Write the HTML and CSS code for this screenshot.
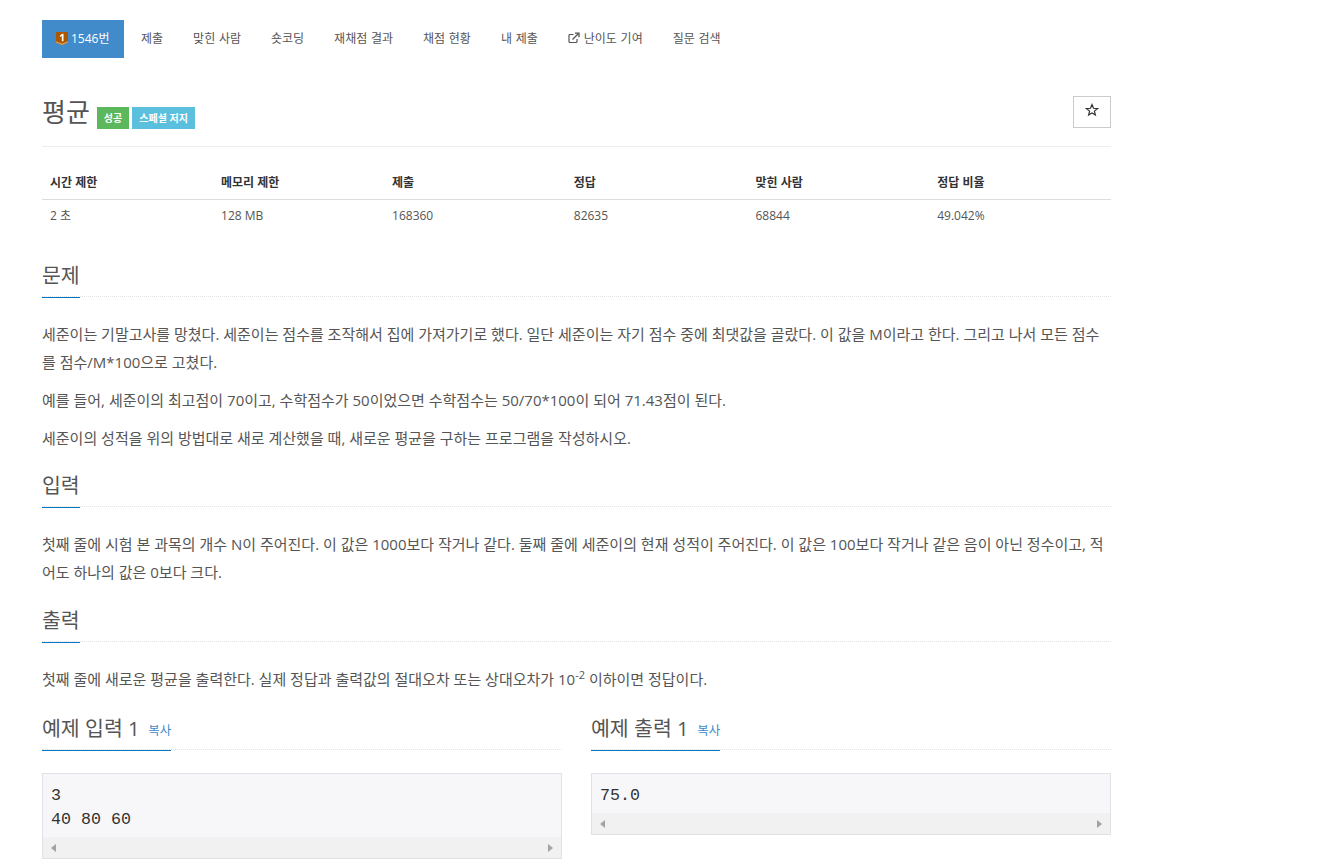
FILE: index.html
```html
<!DOCTYPE html>
<html lang="ko">
<head>
<meta charset="utf-8">
<title>평균</title>
<link rel="stylesheet" href="styles.css">
</head>
<body>
<div class="page">
  <nav class="tabs">
    <a class="tab tab-active"><svg class="tier" viewBox="0 0 12 13" width="12" height="13"><path d="M0 0h12v10.500L6 13 0 10.500z" fill="#ad5600"/><path d="M0 9.300l6 2.300 6-2.300v1.200L6 13 0 10.500z" fill="#e0a050"/><path d="M4 3.500L6.200 1.800h1.300v7.400H5.800V3.900L4 5z" fill="#fff"/></svg><span>1546번</span></a>
    <a class="tab">제출</a>
    <a class="tab">맞힌 사람</a>
    <a class="tab">숏코딩</a>
    <a class="tab">재채점 결과</a>
    <a class="tab">채점 현황</a>
    <a class="tab">내 제출</a>
    <a class="tab"><svg class="ext" viewBox="0 0 12 12" width="12" height="12"><path d="M9 7v2.500A1 1 0 0 1 8 10.500H2A1 1 0 0 1 1 9.500V3.500A1 1 0 0 1 2 2.500h3.500" fill="none" stroke="#555" stroke-width="1.200"/><path d="M4.500 7.500L10 2M7 1.200h4v4" fill="none" stroke="#555" stroke-width="1.300"/></svg>난이도 기여</a>
    <a class="tab">질문 검색</a>
  </nav>

  <header class="title-row">
    <h1 class="title">평균</h1>
    <span class="label label-green">성공</span>
    <span class="label label-blue">스페셜 저지</span>
    <button class="star" aria-label="즐겨찾기"><svg viewBox="0 0 14 14" width="14" height="14"><path d="M7 1.600l1.500 3.700 4 .3-3.100 2.500 1 3.900L7 10l-3.400 2 1-3.900L1.500 5.600l4-.3z" fill="none" stroke="#333" stroke-width="1.200"/></svg></button>
  </header>

  <table class="info">
    <thead>
      <tr><th class="c16">시간 제한</th><th class="c16">메모리 제한</th><th class="c17">제출</th><th class="c17">정답</th><th class="c17">맞힌 사람</th><th class="c17">정답 비율</th></tr>
    </thead>
    <tbody>
      <tr><td>2 초</td><td>128 MB</td><td>168360</td><td>82635</td><td>68844</td><td>49.042%</td></tr>
    </tbody>
  </table>

  <section class="sec sec-first">
    <div class="head"><h2 class="h">문제</h2></div>
    <div class="body">
      <p>세준이는 기말고사를 망쳤다. 세준이는 점수를 조작해서 집에 가져가기로 했다. 일단 세준이는 자기 점수 중에 최댓값을 골랐다. 이 값을 M이라고 한다. 그리고 나서 모든 점수를 점수/M*100으로 고쳤다.</p>
      <p>예를 들어, 세준이의 최고점이 70이고, 수학점수가 50이었으면 수학점수는 50/70*100이 되어 71.43점이 된다.</p>
      <p>세준이의 성적을 위의 방법대로 새로 계산했을 때, 새로운 평균을 구하는 프로그램을 작성하시오.</p>
    </div>
  </section>

  <section class="sec">
    <div class="head"><h2 class="h">입력</h2></div>
    <div class="body">
      <p>첫째 줄에 시험 본 과목의 개수 N이 주어진다. 이 값은 1000보다 작거나 같다. 둘째 줄에 세준이의 현재 성적이 주어진다. 이 값은 100보다 작거나 같은 음이 아닌 정수이고, 적어도 하나의 값은 0보다 크다.</p>
    </div>
  </section>

  <section class="sec sec-wide">
    <div class="head"><h2 class="h">출력</h2></div>
    <div class="body">
      <p>첫째 줄에 새로운 평균을 출력한다. 실제 정답과 출력값의 절대오차 또는 상대오차가 10<sup>-2</sup> 이하이면 정답이다.</p>
    </div>
  </section>

  <div class="samples">
    <section class="sample">
      <div class="head"><h2 class="h">예제 입력 1 <a class="copy">복사</a></h2></div>
      <div class="code">
        <pre>3
40 80 60</pre>
        <div class="bar"><i class="arr arr-l"></i><i class="arr arr-r"></i></div>
      </div>
    </section>
    <section class="sample">
      <div class="head"><h2 class="h">예제 출력 1 <a class="copy">복사</a></h2></div>
      <div class="code">
        <pre>75.0</pre>
        <div class="bar"><i class="arr arr-l"></i><i class="arr arr-r"></i></div>
      </div>
    </section>
  </div>
</div>
</body>
</html>
```
FILE: styles.css
```css
* { box-sizing: border-box; }
html, body { margin: 0; padding: 0; background: #fff; }
body {
  font-family: "Open Sans", "Noto Sans CJK KR", sans-serif;
  color: #555;
  font-size: 14px;
  overflow: hidden;
}
.page { width: 1069px; margin-left: 42px; padding-top: 20px; }

.tabs { display: flex; height: 38px; }
.tab {
  display: flex; align-items: center;
  padding: 0 15px 2px;
  font-size: 12px;
  word-spacing: 0.600px;
  color: #555;
  white-space: nowrap;
}
.tab-active {
  background: #428bca; color: #fff;
  width: 82px;
  padding: 0 0 2px 14px;
  margin-right: 2px;
}
.tier { margin-right: 3px; }
.ext { margin-right: 4px; }

.title-row {
  display: flex; align-items: flex-end;
  margin-top: 38px;
  height: 51px;
  padding-bottom: 17px;
  border-bottom: 1px solid #eee;
}
.title { margin: 0 7px 1px 0; font-size: 26px; font-weight: 400; line-height: 32px; color: #555; }
.label {
  display: inline-block; height: 22px; line-height: 22px;
  padding: 0 7px; margin-right: 3px;
  font-size: 10px; font-weight: 700; color: #fff;
}
.label-green { background: #5cb85c; }
.label-blue { background: #5bc0de; }
.star {
  margin-left: auto; align-self: flex-start;
  width: 38px; height: 32px; padding: 0 0 4px;
  border: 1px solid #ccc; background: #fff;
  display: flex; align-items: center; justify-content: center;
}

.info { width: 100%; border-collapse: collapse; table-layout: fixed; margin-top: 18px; font-size: 12px; }
.info th { text-align: left; font-weight: 700; padding: 8px; height: 34px; border-bottom: 1px solid #ddd; color: #333; }
.info td { padding: 6px 8px 10px; height: 33px; color: #555; }
.c16 { width: 16%; }
.c17 { width: 17%; }

.sec { margin-top: 13px; }
.sec-wide { margin-top: 14px; }
.sec-first { margin-top: 21px; }
.head { border-bottom: 1px dotted #e2e2e2; height: 42px; }
.h {
  display: inline-block; margin: 0; height: 43px;
  font-size: 20.500px; font-weight: 400; line-height: 40px; color: #555;
  border-bottom: 1px solid #0076c0;
  white-space: nowrap;
}
.body { padding-top: 23px; }
.body p { margin: 0 0 10px; line-height: 28px; font-size: 15px; color: #555; word-break: break-all; }
.body sup { font-size: 11px; line-height: 0; }

.samples { display: grid; grid-template-columns: 520px 520px; column-gap: 29px; margin-top: 15px; }
.sample .h { line-height: 40px; }
.copy { font-size: 12.500px; color: #428bca; margin-left: 3px; vertical-align: 1px; }
.code { margin-top: 23px; border: 1px solid #e1e1e8; background: #f7f7f9; }
.code pre {
  margin: 0; padding: 9.500px 8px 5.500px;
  font: 16.670px/24px "Liberation Mono", "DejaVu Sans Mono", monospace;
  color: #333;
}
.bar { height: 21px; background: #f1f1f1; display: flex; justify-content: space-between; align-items: center; padding: 0 8px; }
.arr { width: 0; height: 0; border-top: 4.500px solid transparent; border-bottom: 4.500px solid transparent; }
.arr-l { border-right: 5px solid #a3a3a3; }
.arr-r { border-left: 5px solid #a3a3a3; }
```
